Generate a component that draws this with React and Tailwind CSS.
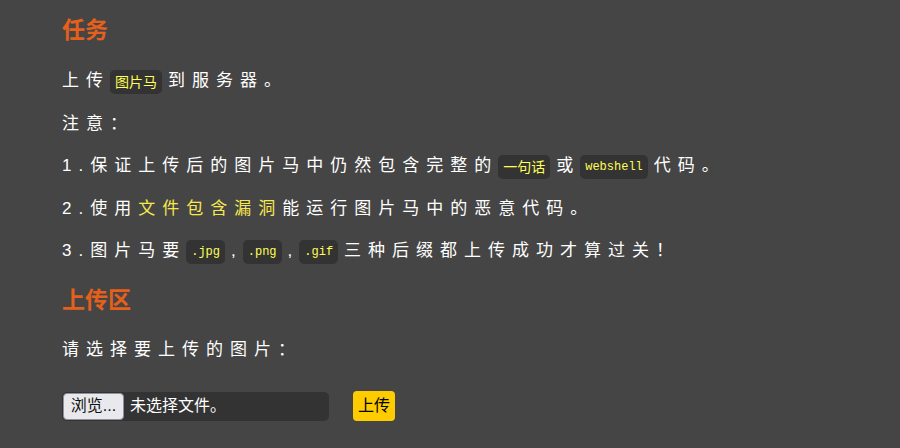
import React from 'react';

// small inline code tag used inside the task text
const Tag = ({ children, mono = false }) => (
    <span
        className={`inline-block align-middle h-[24px] leading-[24px] px-[5px] mr-[6px] rounded-[5px] bg-[#333333] text-[#ffff55] tracking-normal ${
            mono ? "text-[12px] font-['Liberation_Mono',monospace]" : "text-[14px]"
        }`}
    >
        {children}
    </span>
);

const App = () => {
    return (
        <div className="min-h-screen w-full bg-[#454545] text-white font-['Liberation_Sans','Noto_Sans_CJK_SC',sans-serif] pl-[62px] pt-[14px]">
            {/* Task */}
            <h2 className="text-[23px] leading-[32px] font-bold text-[#e5601a] mb-[21px]">任务</h2>

            <div className="flex flex-col gap-[14.5px] text-[17px] leading-[28px] tracking-[7px]">
                <p>
                    上传<Tag>图片马</Tag>到服务器。
                </p>
                <p>注意：</p>
                <p>
                    1.保证上传后的图片马中仍然包含完整的<Tag>一句话</Tag>或<Tag mono>webshell</Tag>代码。
                </p>
                <p>
                    2.使用<span className="text-[#f7e84e]">文件包含漏洞</span>能运行图片马中的恶意代码。
                </p>
                <p>
                    3.图片马要<Tag mono>.jpg</Tag>,<Tag mono>.png</Tag>,<Tag mono>.gif</Tag>三种后缀都上传成功才算过关！
                </p>
            </div>

            {/* Upload area */}
            <h2 className="text-[23px] leading-[32px] font-bold text-[#e5601a] mt-[19px]">上传区</h2>

            <p className="text-[17px] leading-[28px] tracking-[7px] mt-[20px]">请选择要上传的图片：</p>

            <div className="flex items-center mt-[27px]">
                <div className="flex items-center w-[267px] h-[29px] rounded-[5px] bg-[#333333] pl-[1px]">
                    <span className="flex items-center justify-center w-[61px] h-[27px] rounded-[4px] border border-[#8f8f9d] bg-[#e9e9ed] text-[#111] text-[16px]">
                        浏览...
                    </span>
                    <span className="ml-[6px] text-[16px] text-white">未选择文件。</span>
                </div>
                <button
                    type="button"
                    className="ml-[24px] h-[30px] px-[5px] rounded-[4px] bg-[#ffcc00] text-black text-[16px] leading-[30px]"
                >
                    上传
                </button>
            </div>
        </div>
    );
};

export default App;
